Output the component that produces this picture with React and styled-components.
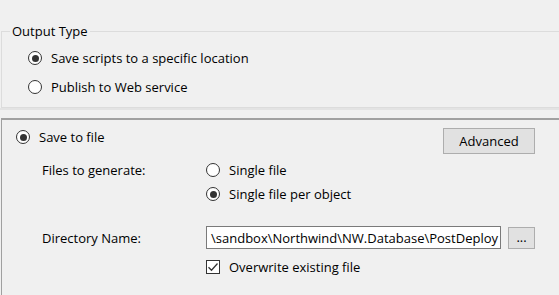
import React from "react";
import styled, { createGlobalStyle } from "styled-components";

const Global = createGlobalStyle`
  html, body { margin: 0; padding: 0; background: #f0f0f0; }
  body { font-family: "Open Sans", "Noto Sans", "Liberation Sans", sans-serif; font-size: 13px; color: #000; }
  * { box-sizing: border-box; }
`;

const Page = styled.div`
  width: 559px;
  height: 295px;
  overflow: hidden;
  background: #f0f0f0;
  display: flex;
  flex-direction: column;
`;

const TopSection = styled.div`
  padding-top: 24px;
  border-bottom: 2px solid #e3e3e3;
`;

const Group = styled.fieldset`
  margin: 0 -20px 0 1px;
  padding: 10px 0 10px 0;
  border: 1px solid #dcdcdc;
`;

const GroupBody = styled.div`
  display: flex;
  flex-direction: column;
  gap: 9px;
  padding-left: 26px;
`;

const Legend = styled.legend`
  margin-left: 8px;
  padding: 0 2px;
  line-height: 14px;
`;

const Panel = styled.div`
  margin-top: 8px;
  flex: 1;
  border-top: 2px solid #a0a0a0;
  border-left: 1px solid #a0a0a0;
  margin-left: 1px;
  display: flex;
  flex-direction: column;
`;

const PanelHeader = styled.div`
  height: 34px;
  display: flex;
  justify-content: space-between;
  align-items: flex-start;
  padding: 0 24px 0 14px;
`;

const HeaderRadio = styled.div`
  margin-top: 7px;
`;

const Button = styled.button`
  font: inherit;
  color: #000;
  background: #e1e1e1;
  border: 1px solid #adadad;
  border-radius: 0;
  padding: 0;
  margin-top: ${(p) => p.$top || 0}px;
  width: ${(p) => p.$w}px;
  height: ${(p) => p.$h}px;
  display: flex;
  align-items: center;
  justify-content: center;
  line-height: 1;
`;

const Form = styled.div`
  display: grid;
  grid-template-columns: 164px 1fr;
  padding: 4px 24px 0 40px;
  row-gap: 20px;
`;

const FieldLabel = styled.div`
  height: 24px;
  display: flex;
  align-items: center;
`;

const Options = styled.div`
  display: flex;
  flex-direction: column;
`;

const OptionRow = styled.div`
  height: 24px;
  display: flex;
  align-items: center;
`;

const Row = styled.div`
  display: flex;
  align-items: center;
  gap: 7px;
  height: 23px;
`;

const TextBox = styled.div`
  width: 295px;
  height: 23px;
  background: #fff;
  border: 1px solid #7a7a7a;
  display: flex;
  align-items: center;
  justify-content: flex-end;
  overflow: hidden;
  white-space: nowrap;
  padding: 0 2px;
`;

const CheckRow = styled.div`
  grid-column: 2;
  margin-top: -13px;
  display: flex;
  align-items: center;
  gap: 9px;
  height: 20px;
`;

const Label = styled.label`
  display: flex;
  align-items: center;
  gap: 9px;
  height: 20px;
  white-space: nowrap;
`;

const Circle = styled.span`
  width: 14px;
  height: 14px;
  border-radius: 50%;
  border: 1px solid #333;
  background: #fff;
  display: flex;
  align-items: center;
  justify-content: center;
  flex: none;
  &::after {
    content: "";
    width: 7px;
    height: 7px;
    border-radius: 50%;
    background: #333;
    display: ${(p) => (p.$on ? "block" : "none")};
  }
`;

const Box = styled.span`
  width: 14px;
  height: 14px;
  border: 1px solid #333;
  background: #fff;
  flex: none;
  display: flex;
  align-items: center;
  justify-content: center;
`;

function Radio({ checked, children }) {
  return (
    <Label>
      <Circle $on={checked} />
      <span>{children}</span>
    </Label>
  );
}

export default function App() {
  return (
    <>
      <Global />
      <Page>
        <TopSection>
          <Group>
            <Legend>Output Type</Legend>
            <GroupBody>
              <Radio checked>Save scripts to a specific location</Radio>
              <Radio>Publish to Web service</Radio>
            </GroupBody>
          </Group>
        </TopSection>
        <Panel>
          <PanelHeader>
            <HeaderRadio>
              <Radio checked>Save to file</Radio>
            </HeaderRadio>
            <Button $top={8} $w={92} $h={26}>Advanced</Button>
          </PanelHeader>
          <Form>
            <FieldLabel>Files to generate:</FieldLabel>
            <Options>
              <OptionRow><Radio>Single file</Radio></OptionRow>
              <OptionRow><Radio checked>Single file per object</Radio></OptionRow>
            </Options>
            <FieldLabel>Directory Name:</FieldLabel>
            <Row>
              <TextBox>\sandbox\Northwind\NW.Database\PostDeploy</TextBox>
              <Button $w={27} $h={22}>...</Button>
            </Row>
            <CheckRow>
              <Box>
                <svg width="12" height="12" viewBox="0 0 12 12">
                  <path d="M1.5 6.2 L4.5 9.2 L10.5 2.5" fill="none" stroke="#333" strokeWidth="1.3" />
                </svg>
              </Box>
              <span>Overwrite existing file</span>
            </CheckRow>
          </Form>
        </Panel>
      </Page>
    </>
  );
}
